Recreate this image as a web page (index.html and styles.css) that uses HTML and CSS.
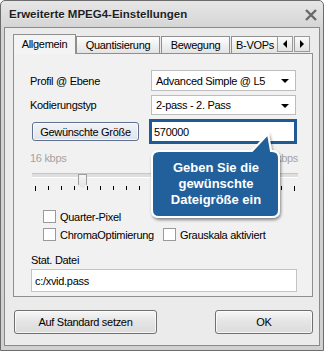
FILE: index.html
```html
<!DOCTYPE html>
<html lang="de">
<head>
  <meta charset="UTF-8" />
  <title>Erweiterte MPEG4-Einstellungen</title>
  <link rel="stylesheet" href="styles.css">
</head>
<body>
  <div class="window">
    <!-- Title bar -->
    <div class="title-bar">
      <span class="title">Erweiterte MPEG4-Einstellungen</span>
      <svg class="close" width="14" height="12" viewBox="0 0 14 12">
        <path d="M2 1 L12 11 M12 1 L2 11" stroke="#6a6a6a" stroke-width="2.4" fill="none"/>
      </svg>
    </div>

    <div class="client">
      <!-- Tabs -->
      <div class="tabs">
        <div class="tab-strip">
          <div class="tab active">Allgemein</div>
          <div class="tab">Quantisierung</div>
          <div class="tab">Bewegung</div>
          <div class="tab clipped">B-VOPs</div>
          <div class="tab-arrows">
            <div class="arrow-btn"><svg width="6" height="8" viewBox="0 0 6 8"><path d="M5 0 V8 L1 4 Z" fill="#000"/></svg></div>
            <div class="arrow-btn"><svg width="6" height="8" viewBox="0 0 6 8"><path d="M1 0 V8 L5 4 Z" fill="#000"/></svg></div>
          </div>
        </div>

        <div class="panel">
          <div class="form-row first">
            <span class="label">Profil @ Ebene</span>
            <div class="select">Advanced Simple @ L5<span class="caret"></span></div>
          </div>
          <div class="form-row second">
            <span class="label">Kodierungstyp</span>
            <div class="select short">2-pass - 2. Pass<span class="caret"></span></div>
          </div>
          <div class="size-row">
            <div class="btn size-btn">Gewünschte Größe</div>
            <div class="size-input">570000</div>
          </div>

          <div class="rate-row">
            <span>16 kbps</span>
            <span>8000 kbps</span>
          </div>
          <div class="slider">
            <div class="track"></div>
            <div class="thumb"></div>
            <div class="ticks">
              <i></i><i></i><i></i><i></i><i></i><i></i><i></i><i></i><i></i><i></i><i></i>
              <i></i><i></i><i></i><i></i><i></i><i></i><i></i><i></i><i></i><i></i>
            </div>
          </div>

          <div class="check-row">
            <label class="check"><span class="box"></span><span class="check-text">Quarter-Pixel</span></label>
          </div>
          <div class="check-row second-check">
            <label class="check wide"><span class="box"></span><span class="check-text">ChromaOptimierung</span></label>
            <label class="check"><span class="box"></span><span class="check-text">Grauskala aktiviert</span></label>
          </div>

          <div class="stat-label">Stat. Datei</div>
          <div class="stat-input">c:/xvid.pass</div>
        </div>
      </div>

      <!-- Bottom buttons -->
      <div class="button-row">
        <div class="btn wide-btn">Auf Standard setzen</div>
        <div class="btn ok-btn">OK</div>
      </div>
    </div>

    <!-- Callout hint -->
    <svg class="callout-shape" width="324" height="351" viewBox="0 0 324 351">
      <defs>
        <filter id="shade" x="-20%" y="-20%" width="140%" height="150%">
          <feDropShadow dx="1" dy="2" stdDeviation="1.5" flood-color="#000" flood-opacity="0.45"/>
        </filter>
      </defs>
      <path d="M159 151 H252 L268 134 L271 151 H272 Q279 151 279 158 V210 Q279 217 272 217 H159 Q152 217 152 210 V158 Q152 151 159 151 Z"
            fill="#22609b" stroke="#fff" stroke-width="2" filter="url(#shade)"/>
    </svg>
    <div class="callout-text">Geben Sie die<br>gewünschte<br>Dateigröße ein</div>
  </div>
</body>
</html>
```

FILE: styles.css
```css
/* Base */
body {
  margin: 0;
  background: #ffffff;
  font-family: "Liberation Sans", Arial, sans-serif;
  font-size: 11px;
  letter-spacing: -0.3px;
  color: #000;
}

/* Window frame */
.window {
  position: relative;
  width: 324px;
  height: 351px;
  box-sizing: border-box;
  border: 1px solid #6c6c6c;
  border-radius: 5px 5px 0 0;
  padding: 0 3px 4px 3px;
  background: linear-gradient(180deg, #e6e6e6, #d3d3d3 30px, #d0d0d0);
  display: flex;
  flex-direction: column;
}

.title-bar {
  height: 26px;
  display: flex;
  align-items: center;
  justify-content: space-between;
  padding: 0 2px 0 5px;
}
.title {
  font-weight: bold;
  font-size: 11.5px;
  letter-spacing: 0;
  color: #1e1e1e;
  text-shadow: 0 1px 0 rgba(255,255,255,0.6);
}
.close {
  margin-top: 2px;
}

.client {
  flex: 1;
  border: 1px solid #8a8a8a;
  background: #ebebeb;
  padding: 6px 6px 0 8px;
}

/* Tabs */
.tab-strip {
  height: 19px;
  display: flex;
  align-items: flex-end;
  position: relative;
  z-index: 1;
}
.tab {
  height: 17px;
  box-sizing: border-box;
  border: 1px solid #8f8f8f;
  border-bottom: none;
  background: linear-gradient(180deg, #fdfdfd, #e3e3e3);
  display: flex;
  align-items: center;
  justify-content: center;
  white-space: nowrap;
  margin-right: 1px;
}
.tab:nth-child(2) { width: 84px; }
.tab:nth-child(3) { width: 69px; }
.tab.active {
  height: 20px;
  width: 63px;
  margin-bottom: -1px;
  background: #f4f4f4;
  border-color: #8f8f8f;
  margin-right: 0;
  padding-bottom: 2px;
}
.tab.clipped {
  width: 46px;
  justify-content: flex-start;
  padding-left: 4px;
  overflow: hidden;
  border-right: none;
  margin-right: 0;
}
.tab-arrows {
  display: flex;
  gap: 1px;
  margin-bottom: 1px;
}
.arrow-btn {
  width: 16px;
  height: 16px;
  box-sizing: border-box;
  border: 1px solid #9a9a9a;
  background: linear-gradient(180deg, #fbfbfb, #e2e2e2);
  display: flex;
  align-items: center;
  justify-content: center;
}

.panel {
  height: 244px;
  box-sizing: border-box;
  border: 1px solid #8f8f8f;
  background: #f1f1f1;
  padding: 16px 0 0 16px;
}

/* Form rows */
.form-row {
  display: grid;
  grid-template-columns: 121px 145px;
  align-items: center;
}
.form-row.second {
  margin-top: 4px;
}
.select {
  height: 21px;
  box-sizing: border-box;
  border: 1px solid #bdbdbd;
  background: #fff;
  padding: 0 0 0 4px;
  display: flex;
  align-items: center;
  justify-content: space-between;
}
.select.short {
  height: 20px;
}
.caret {
  width: 0;
  height: 0;
  border-left: 4px solid transparent;
  border-right: 4px solid transparent;
  border-top: 4px solid #000;
  margin-right: 6px;
  margin-top: 1px;
}

.size-row {
  display: flex;
  align-items: center;
  margin-top: 4px;
}
.btn {
  box-sizing: border-box;
  border: 1px solid #707070;
  border-radius: 3px;
  background: linear-gradient(180deg, #f6f6f6, #e4e4e4 50%, #dcdcdc);
  box-shadow: inset 0 0 0 1px rgba(255,255,255,0.7);
  display: flex;
  align-items: center;
  justify-content: center;
  white-space: nowrap;
}
.size-btn {
  margin-left: 2px;
  width: 107px;
  height: 19px;
  border-color: #5f7190;
  background: linear-gradient(180deg, #f2f3f7, #e0e3ea);
}
.size-input {
  margin-left: 10px;
  width: 148px;
  height: 25px;
  box-sizing: border-box;
  border: 3px solid #1f5a94;
  background: #fff;
  padding-left: 2px;
  display: flex;
  align-items: center;
}

/* Slider */
.rate-row {
  width: 268px;
  margin-top: 8px;
  display: flex;
  justify-content: space-between;
  color: #a3a3a3;
  height: 13px;
  line-height: 13px;
}
.slider {
  position: relative;
  margin: 4px 0 0 2px;
  width: 266px;
  height: 24px;
}
.track {
  margin-top: 8px;
  height: 3px;
  border-top: 1px solid #c6c6c6;
  border-bottom: 1px solid #fff;
  background: #dedede;
}
.thumb {
  position: absolute;
  left: 46px;
  top: 1px;
  width: 9px;
  height: 14px;
  box-sizing: border-box;
  border: 1px solid #9c9c9c;
  border-bottom: none;
  background: linear-gradient(180deg, #f6f6f6, #e2e2e2);
  clip-path: polygon(0 0, 100% 0, 100% 75%, 50% 100%, 0 75%);
}
.ticks {
  margin-top: 8px;
  padding: 0 3px;
  display: flex;
  justify-content: space-between;
}
.ticks i {
  width: 1px;
  height: 4px;
  background: #000;
}
.ticks i:first-child,
.ticks i:last-child {
  height: 5px;
}

/* Checkboxes */
.check-row {
  display: flex;
  margin-top: 13px;
  padding-left: 13px;
  height: 13px;
}
.check-row.second-check {
  margin-top: 5px;
}
.check {
  display: flex;
  align-items: center;
  gap: 4px;
}
.check.wide {
  width: 120px;
  overflow: hidden;
}
.check.wide .check-text {
  width: 94px;
  overflow: hidden;
  white-space: nowrap;
}
.box {
  width: 13px;
  height: 13px;
  box-sizing: border-box;
  border: 1px solid #9a9a9a;
  background: #fff;
  flex-shrink: 0;
}

/* Stat file */
.stat-label {
  margin: 13px 0 0 1px;
  height: 12px;
  line-height: 12px;
}
.stat-input {
  margin: 3px 0 0 1px;
  width: 266px;
  height: 23px;
  box-sizing: border-box;
  border: 1px solid #c4c4c4;
  background: #fff;
  padding-left: 3px;
  display: flex;
  align-items: center;
}

/* Bottom buttons */
.button-row {
  display: flex;
  justify-content: space-between;
  margin-top: 13px;
  padding: 0 0 0 1px;
}
.wide-btn {
  width: 143px;
  height: 24px;
}
.ok-btn {
  width: 98px;
  height: 24px;
}

/* Callout overlay */
.callout-shape {
  position: absolute;
  left: -1px;
  top: -1px;
  pointer-events: none;
}
.callout-text {
  position: absolute;
  left: 151px;
  top: 159px;
  width: 128px;
  text-align: center;
  color: #fff;
  font-weight: bold;
  font-size: 13px;
  letter-spacing: 0;
  line-height: 16px;
}
```
